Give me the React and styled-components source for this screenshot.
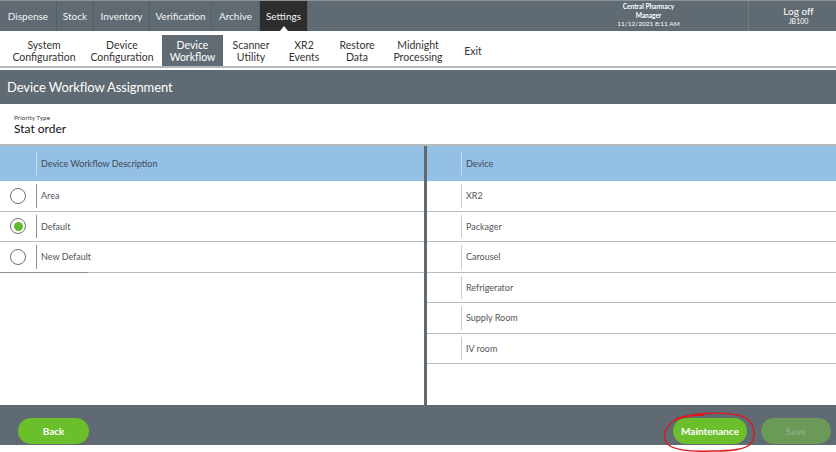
import React from "react";
import styled, { createGlobalStyle } from "styled-components";

const Global = createGlobalStyle`
  html, body { margin: 0; padding: 0; background: #fff; }
  body { font-family: Lato, "Open Sans", sans-serif; }
  * { box-sizing: border-box; }
`;

const Page = styled.div`
  position: relative;
  width: 836px;
  height: 452px;
  overflow: hidden;
  background: #fff;
  display: flex;
  flex-direction: column;
`;

const TopBar = styled.div`
  height: 31px;
  background: #5f6a72;
  border-top: 1px solid #8a949a;
  display: flex;
  align-items: stretch;
  flex-shrink: 0;
`;

const Tab = styled.div`
  position: relative;
  width: ${(p) => p.$w}px;
  display: flex;
  align-items: center;
  justify-content: center;
  color: #f2f4f5;
  font-size: 10px;
  border-right: 1px solid #545e65;
  background: ${(p) => (p.$active ? "#2d2d2d" : "transparent")};
  ${(p) =>
    p.$active &&
    `&::after{content:"";position:absolute;bottom:0;left:50%;margin-left:-4px;border-left:4px solid transparent;border-right:4px solid transparent;border-bottom:5px solid #fff;}`}
`;

const Spacer = styled.div`
  flex: 1;
`;

const InfoBlock = styled.div`
  width: 200px;
  display: flex;
  flex-direction: column;
  align-items: center;
  justify-content: center;
  color: #fff;
  font-size: 6.5px;
  line-height: 8.5px;
  border-right: 1px solid #737d84;
`;

const InfoStrong = styled.span`
  font-weight: 700;
`;

const LogOff = styled.div`
  width: 87px;
  padding-left: 12px;
  display: flex;
  flex-direction: column;
  align-items: center;
  justify-content: center;
  color: #fff;
  font-size: 10px;
  line-height: 11px;
`;

const LogSmall = styled.span`
  font-size: 7px;
  line-height: 9px;
`;

const SubNav = styled.div`
  height: 37px;
  display: flex;
  align-items: flex-end;
  padding-left: 6px;
  border-bottom: 2px solid #b3b8bc;
  flex-shrink: 0;
`;

const SubItem = styled.div`
  width: ${(p) => p.$w}px;
  height: 31px;
  display: flex;
  align-items: center;
  justify-content: center;
  text-align: center;
  font-size: 10.5px;
  line-height: 12px;
  color: ${(p) => (p.$active ? "#fff" : "#333")};
  background: ${(p) => (p.$active ? "#5f6a72" : "transparent")};
`;

const TitleBar = styled.div`
  margin-top: 2px;
  height: 34px;
  background: #5f6a72;
  color: #fff;
  font-size: 13px;
  letter-spacing: -0.1px;
  display: flex;
  align-items: center;
  padding-left: 7px;
  flex-shrink: 0;
`;

const Priority = styled.div`
  height: 42px;
  padding: 10px 0 0 14px;
  border-bottom: 2px solid #b5babd;
  flex-shrink: 0;
`;

const PriorityLabel = styled.div`
  font-size: 6.5px;
  color: #444;
  line-height: 8px;
`;

const PriorityValue = styled.div`
  font-size: 12px;
  color: #111;
  line-height: 14px;
`;

const Tables = styled.div`
  flex: 1;
  display: flex;
  min-height: 0;
`;

const Panel = styled.div`
  width: ${(p) => (p.$w ? `${p.$w}px` : "auto")};
  flex: ${(p) => (p.$w ? "none" : 1)};
  display: flex;
  flex-direction: column;
  border-right: ${(p) => (p.$divider ? "3px solid #5f6a72" : "none")};
  position: relative;
`;

const HeadRow = styled.div`
  height: 35px;
  background: #95c0e6;
  display: flex;
  align-items: center;
  font-size: 9px;
  color: #3f4a55;
`;

const Row = styled.div`
  height: 30.5px;
  display: flex;
  align-items: center;
  font-size: 9px;
  color: #555;
  border-bottom: 1px solid #b8bcbf;
`;

const Lead = styled.div`
  width: ${(p) => p.$w}px;
  display: flex;
  align-items: center;
  justify-content: center;
  align-self: stretch;
`;

const Cell = styled.div`
  align-self: stretch;
  display: flex;
  align-items: center;
  padding-left: 4px;
  border-left: 1px solid ${(p) => (p.$head ? "#c9def2" : p.$soft ? "#c8cbcd" : "#8b9196")};
  margin: ${(p) => (p.$head ? "6px 0" : "3px 0")};
`;

const Radio = styled.div`
  width: 16px;
  height: 16px;
  border-radius: 50%;
  border: 1.2px solid #6b6f73;
  display: flex;
  align-items: center;
  justify-content: center;
  &::after {
    content: "";
    width: 9px;
    height: 9px;
    border-radius: 50%;
    background: ${(p) => (p.$on ? "#5fbb2e" : "transparent")};
  }
`;

const ScrollMark = styled.div`
  width: 88px;
  height: 1.5px;
  background: #8d9398;
  margin-top: -1px;
`;

const Footer = styled.div`
  height: 40px;
  background: #5f6a72;
  display: flex;
  align-items: flex-end;
  padding: 0 5px 1px 18px;
  flex-shrink: 0;
  margin-bottom: 7px;
`;

const Btn = styled.div`
  width: ${(p) => p.$w}px;
  height: 26px;
  border-radius: 13px;
  background: ${(p) => (p.$disabled ? "#6b9a58" : "#6abf2b")};
  color: ${(p) => (p.$disabled ? "#8fae83" : "#fff")};
  font-size: 10px;
  font-weight: 700;
  display: flex;
  align-items: center;
  justify-content: center;
  margin-left: ${(p) => p.$ml || 0}px;
`;

const Scribble = styled.svg`
  position: absolute;
  left: 660px;
  top: 410px;
  width: 98px;
  height: 42px;
  pointer-events: none;
`;

const topTabs = [
  ["Dispense", 57],
  ["Stock", 37],
  ["Inventory", 56],
  ["Verification", 62],
  ["Archive", 48],
  ["Settings", 48, true],
];

const subItems = [
  [["System", "Configuration"], 76],
  [["Device", "Configuration"], 80],
  [["Device", "Workflow"], 61, true],
  [["Scanner", "Utility"], 56],
  [["XR2", "Events"], 50],
  [["Restore", "Data"], 56],
  [["Midnight", "Processing"], 66],
  [["Exit"], 44],
];

const workflows = [
  ["Area", false],
  ["Default", true],
  ["New Default", false],
];

const devices = ["XR2", "Packager", "Carousel", "Refrigerator", "Supply Room", "IV room"];

export default function App() {
  return (
    <Page>
      <Global />
      <TopBar>
        {topTabs.map(([t, w, a]) => (
          <Tab key={t} $w={w} $active={a}>
            {t}
          </Tab>
        ))}
        <Spacer />
        <InfoBlock>
          <InfoStrong>Central Pharmacy</InfoStrong>
          <InfoStrong>Manager</InfoStrong>
          <span>11/12/2021 8:11 AM</span>
        </InfoBlock>
        <LogOff>
          <span>Log off</span>
          <LogSmall>JB100</LogSmall>
        </LogOff>
      </TopBar>
      <SubNav>
        {subItems.map(([lines, w, a]) => (
          <SubItem key={lines.join(" ")} $w={w} $active={a}>
            <div>
              {lines.map((l, i) => (
                <React.Fragment key={l}>
                  {i > 0 && <br />}
                  {l}
                </React.Fragment>
              ))}
            </div>
          </SubItem>
        ))}
      </SubNav>
      <TitleBar>Device Workflow Assignment</TitleBar>
      <Priority>
        <PriorityLabel>Priority Type</PriorityLabel>
        <PriorityValue>Stat order</PriorityValue>
      </Priority>
      <Tables>
        <Panel $w={427} $divider>
          <HeadRow>
            <Lead $w={36} />
            <Cell $head>Device Workflow Description</Cell>
          </HeadRow>
          {workflows.map(([name, on]) => (
            <Row key={name}>
              <Lead $w={36}>
                <Radio $on={on} />
              </Lead>
              <Cell>{name}</Cell>
            </Row>
          ))}
          <ScrollMark />
        </Panel>
        <Panel>
          <HeadRow>
            <Lead $w={34} />
            <Cell $head>Device</Cell>
          </HeadRow>
          {devices.map((d) => (
            <Row key={d}>
              <Lead $w={34} />
              <Cell $soft>{d}</Cell>
            </Row>
          ))}
        </Panel>
      </Tables>
      <Footer>
        <Btn $w={71}>Back</Btn>
        <Spacer />
        <Btn $w={74}>Maintenance</Btn>
        <Btn $w={70} $ml={14} $disabled>
          Save
        </Btn>
      </Footer>
      <Scribble viewBox="0 0 98 42">
        <path
          d="M14 10 C30 2 70 1 84 7 C94 12 96 24 92 32 C88 40 70 41 50 41 C30 42 10 40 6 32 C2 24 6 14 18 9 C26 6 36 5 44 5"
          fill="none"
          stroke="#e0161b"
          strokeWidth="1.3"
        />
      </Scribble>
    </Page>
  );
}
